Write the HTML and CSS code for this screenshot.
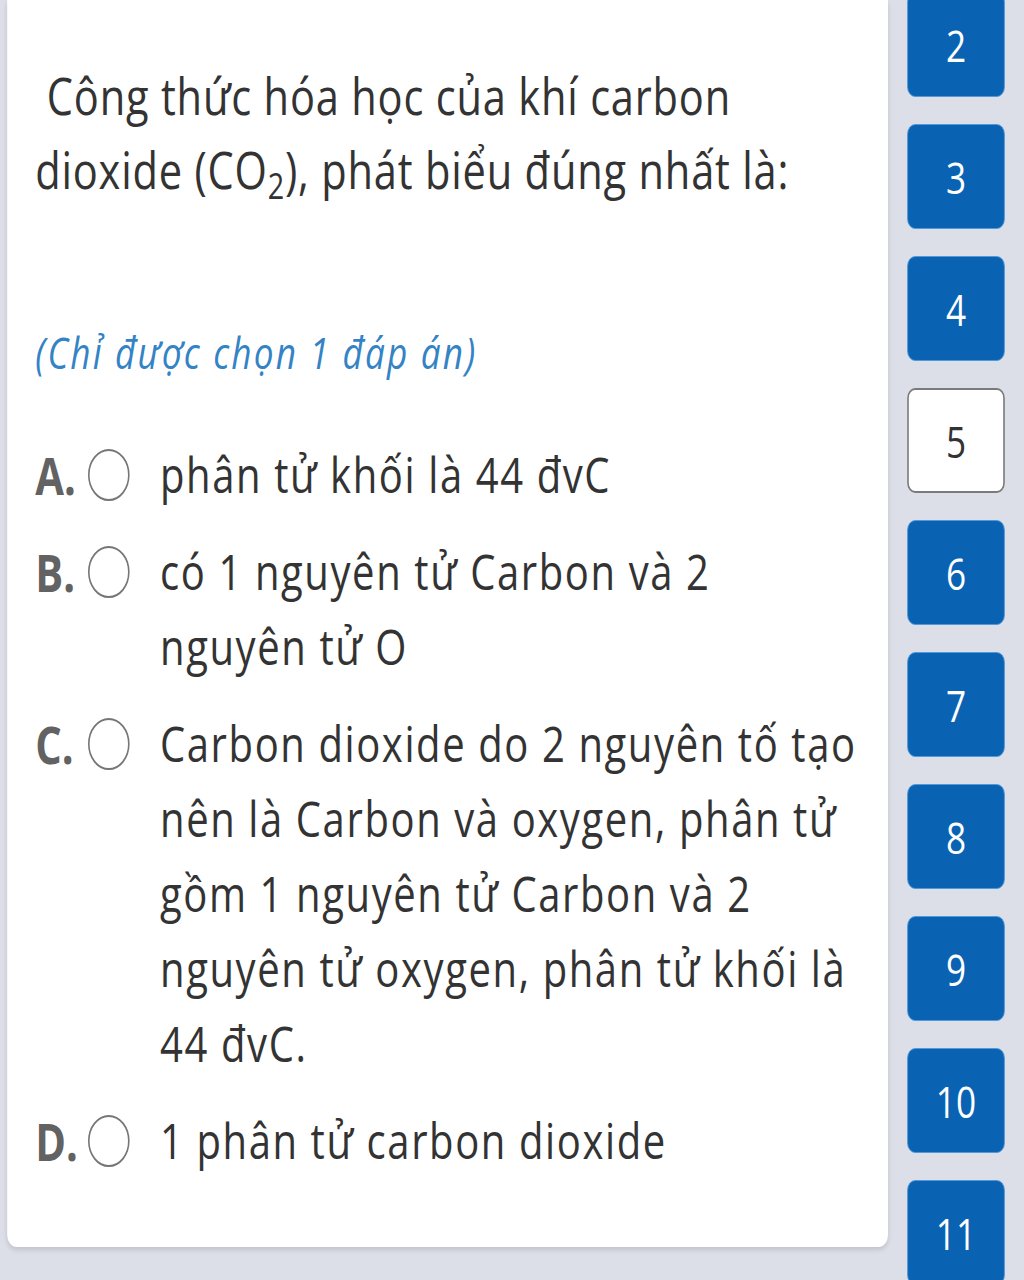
FILE: index.html
```html
<!DOCTYPE html>
<html lang="vi">
<head>
    <meta charset="UTF-8">
    <meta name="viewport" content="width=device-width, initial-scale=1.0">
    <title>Câu hỏi trắc nghiệm</title>
    <link rel="stylesheet" href="styles.css">
</head>
<body>
    <div class="page">
        <main class="card">
            <p class="question">&nbsp;Công thức hóa học của khí carbon<br>dioxide (CO<sub>2</sub>), phát biểu đúng nhất là:</p>

            <p class="hint">(Chỉ được chọn 1 đáp án)</p>

            <ul class="options">
                <li class="option">
                    <span class="letter">A.</span>
                    <span class="radio"></span>
                    <span class="answer">phân tử khối là 44 đvC</span>
                </li>
                <li class="option">
                    <span class="letter">B.</span>
                    <span class="radio"></span>
                    <span class="answer">có 1 nguyên tử Carbon và 2<br>nguyên tử O</span>
                </li>
                <li class="option">
                    <span class="letter">C.</span>
                    <span class="radio"></span>
                    <span class="answer">Carbon dioxide do 2 nguyên tố tạo<br>nên là Carbon và oxygen, phân tử<br>gồm 1 nguyên tử Carbon và 2<br>nguyên tử oxygen, phân tử khối là<br>44 đvC.</span>
                </li>
                <li class="option">
                    <span class="letter">D.</span>
                    <span class="radio"></span>
                    <span class="answer">1 phân tử carbon dioxide</span>
                </li>
            </ul>
        </main>

        <nav class="numbers">
            <a class="num">2</a>
            <a class="num">3</a>
            <a class="num">4</a>
            <a class="num current">5</a>
            <a class="num">6</a>
            <a class="num">7</a>
            <a class="num">8</a>
            <a class="num">9</a>
            <a class="num">10</a>
            <a class="num">11</a>
        </nav>
    </div>
</body>
</html>
```

FILE: styles.css
```css
html,
body {
    margin: 0;
    padding: 0;
    height: 100%;
    overflow: hidden;
}
body {
    background: #dcdee8;
    font-family: 'Open Sans', 'Noto Sans', sans-serif;
    color: #333;
}
/* the capture is squeezed sideways, so lay out wide and scale */
.page {
    width: 1280px;
    height: 1280px;
    box-sizing: border-box;
    padding-left: 9px;
    display: flex;
    align-items: flex-start;
    gap: 24px;
    transform: scaleX(0.8);
    transform-origin: 0 0;
}
.card {
    width: 1101px;
    flex: none;
    box-sizing: border-box;
    background: #fff;
    border-radius: 0 0 12px 12px;
    box-shadow: 0 3px 6px rgba(0, 0, 0, 0.12);
    padding: 58px 30px 69px 35px;
}
.question {
    margin: 0;
    font-size: 52px;
    line-height: 74px;
    letter-spacing: 1px;
    white-space: nowrap;
}
.question sub {
    font-size: 36px;
    line-height: 0;
    vertical-align: -10px;
}
.hint {
    margin: 119px 0 0;
    font-size: 44px;
    line-height: 54px;
    letter-spacing: 2.7px;
    font-style: italic;
    color: #3383c5;
}
.options {
    list-style: none;
    margin: 58px 0 0;
    padding: 0;
}
.option {
    display: flex;
    align-items: flex-start;
    margin-bottom: 22px;
}
.option:last-child {
    margin-bottom: 0;
}
.letter {
    width: 66px;
    flex: none;
    font-size: 52px;
    font-weight: 700;
    line-height: 75px;
    color: #626262;
}
.radio {
    width: 52px;
    height: 52px;
    flex: none;
    box-sizing: border-box;
    border: 2px solid #767676;
    border-radius: 50%;
    margin: 12px 38px 0 0;
}
.answer {
    font-size: 50px;
    line-height: 75px;
    letter-spacing: 2px;
    white-space: nowrap;
}
.numbers {
    width: 122px;
    flex: none;
    display: flex;
    flex-direction: column;
    gap: 27px;
    margin-top: -8px;
}
.num {
    height: 105px;
    flex: none;
    box-sizing: border-box;
    display: flex;
    align-items: center;
    justify-content: center;
    background: #0a63b2;
    border: 1px solid #4f97da;
    border-radius: 10px;
    color: #fff;
    font-size: 44px;
}
.num.current {
    background: #fff;
    border: 2px solid #7a7a7a;
    color: #333;
}
```
